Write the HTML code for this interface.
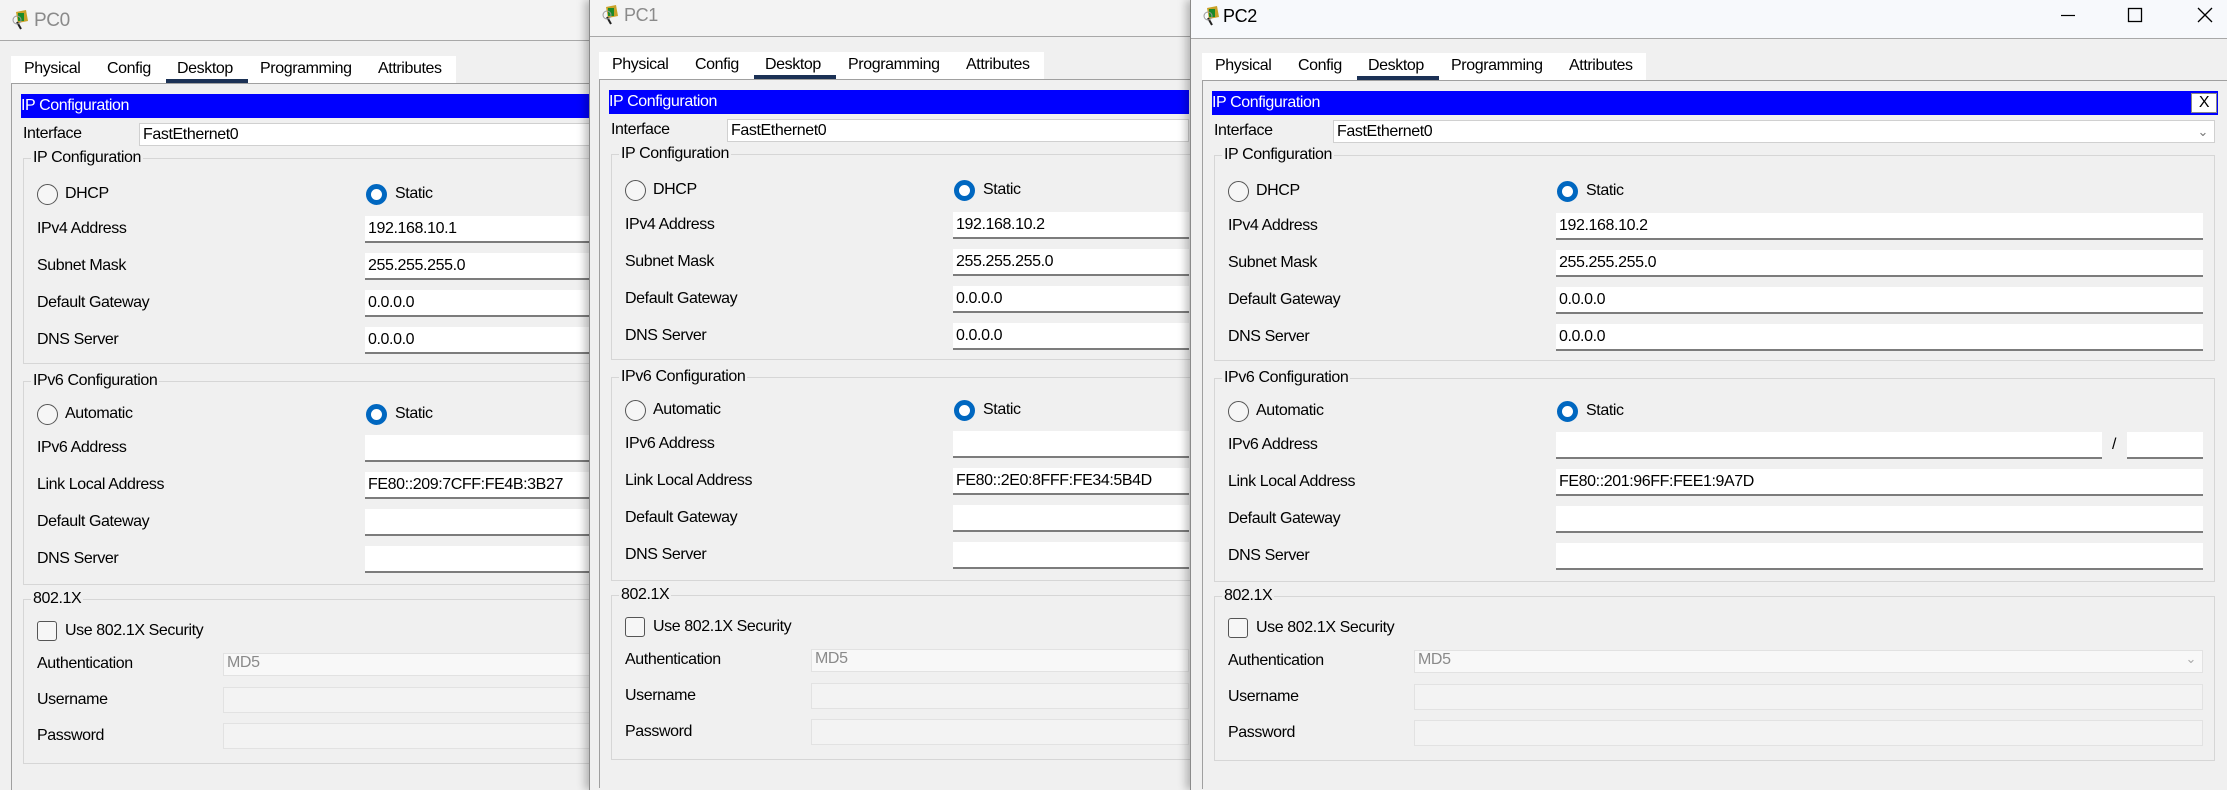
<!DOCTYPE html>
<html><head><meta charset="utf-8"><style>
*{box-sizing:border-box;margin:0;padding:0}
body{width:2227px;height:790px;overflow:hidden;background:#f0f0f0;font-family:"Liberation Sans",sans-serif;font-size:16px;letter-spacing:-0.4px;color:#000;position:relative}
.win{position:absolute;top:0;height:790px;background:#f0f0f0;overflow:hidden;border-left:1px solid #8a8a8a}
.tb{position:absolute;left:0;right:0;top:0;background:#f2f2f2;border-bottom:1px solid #a8a8a8}
.tb span{position:absolute;left:34px;font-size:17px}
.ico{position:absolute;left:12px;width:20px;height:22px}
.in{position:absolute;left:0;top:2px;right:0;bottom:0}
.a{position:absolute;white-space:nowrap}
.tabs{position:absolute;left:11px;top:54px;width:445px;height:28px;background:#fff}
.tabs span{position:absolute;top:4px}
.ul{position:absolute;left:155px;top:23px;width:82px;height:4px;background:#1b3155}
.panel{position:absolute;left:11px;top:81px;right:-2px;bottom:-2px;border-top:1px solid #a0a0a0;border-left:1px solid #a0a0a0}
.blue{position:absolute;left:21px;top:92px;height:24px;background:#0000ff;color:#fff;line-height:24px}
.lbl{position:absolute;left:37px;line-height:20px}
.inp{position:absolute;background:#fff;border-bottom:2px solid #7c7c7c;height:27px;line-height:25px;padding-left:3px}
.grp{position:absolute;left:23px;border:1px solid #d6d6d6}
.leg{position:absolute;left:31px;background:#f0f0f0;padding:0 2px;line-height:20px}
.rad{position:absolute;width:21px;height:21px;border-radius:50%;border:1px solid #555;background:#f6f6f6}
.rad.on{border:5.5px solid #0067c0;background:#fff}
.chk{position:absolute;left:37px;width:20px;height:20px;border:1px solid #555;border-radius:3px;background:#f6f6f6}
.fld{position:absolute;left:223px;border:1px solid #e2e2e2;background:#f3f3f3;color:#8a8a8a;padding-left:3px}
</style></head><body>

<!-- PC0 -->
<div class="win" style="left:0;width:600px;border-left:none">
 <div class="tb" style="height:41px;background:#f3f3f3"><svg class="ico" style="top:9px" viewBox="0 0 20 22"><path d="M4 3 L14 1 L16 12 L6 14Z" fill="#c9a227"/><rect x="6" y="4" width="6" height="8" fill="#1a8a2a"/><path d="M5 13 L9 20" stroke="#222" stroke-width="2"/><circle cx="5" cy="11" r="4" fill="none" stroke="#999"/></svg><span style="top:10px;color:#8a8a8a;font-size:19px">PC0</span></div>
 <div class="in">
  <div class="tabs"><span style="left:13px">Physical</span><span style="left:96px">Config</span><span style="left:166px">Desktop</span><span style="left:249px">Programming</span><span style="left:367px">Attributes</span><div class="ul"></div></div>
  <div class="panel"></div>
  <div class="blue" style="right:0">IP Configuration</div>
  <div class="lbl" style="left:23px;top:122px">Interface</div>
  <div class="inp" style="left:139px;top:121px;right:0;height:23px;line-height:21px;border:1px solid #d0d0d0">FastEthernet0</div>
  <div class="grp" style="top:156px;height:206px;right:-5px"></div><div class="leg" style="top:146px">IP Configuration</div>
  <div class="rad" style="left:37px;top:182px"></div><div class="lbl" style="left:65px;top:182px">DHCP</div>
  <div class="rad on" style="left:366px;top:182px"></div><div class="lbl" style="left:395px;top:182px">Static</div>
  <div class="lbl" style="top:217px">IPv4 Address</div><div class="inp" style="left:365px;right:0;top:214px">192.168.10.1</div>
  <div class="lbl" style="top:254px">Subnet Mask</div><div class="inp" style="left:365px;right:0;top:251px">255.255.255.0</div>
  <div class="lbl" style="top:291px">Default Gateway</div><div class="inp" style="left:365px;right:0;top:288px">0.0.0.0</div>
  <div class="lbl" style="top:328px">DNS Server</div><div class="inp" style="left:365px;right:0;top:325px">0.0.0.0</div>
  <div class="grp" style="top:379px;height:204px;right:-5px"></div><div class="leg" style="top:369px">IPv6 Configuration</div>
  <div class="rad" style="left:37px;top:402px"></div><div class="lbl" style="left:65px;top:402px">Automatic</div>
  <div class="rad on" style="left:366px;top:402px"></div><div class="lbl" style="left:395px;top:402px">Static</div>
  <div class="lbl" style="top:436px">IPv6 Address</div><div class="inp" style="left:365px;right:0;top:433px"></div>
  <div class="lbl" style="top:473px">Link Local Address</div><div class="inp" style="left:365px;right:0;top:470px">FE80::209:7CFF:FE4B:3B27</div>
  <div class="lbl" style="top:510px">Default Gateway</div><div class="inp" style="left:365px;right:0;top:507px"></div>
  <div class="lbl" style="top:547px">DNS Server</div><div class="inp" style="left:365px;right:0;top:544px"></div>
  <div class="grp" style="top:597px;height:165px;right:-5px"></div><div class="leg" style="top:587px">802.1X</div>
  <div class="chk" style="top:619px"></div><div class="lbl" style="left:65px;top:619px">Use 802.1X Security</div>
  <div class="lbl" style="top:652px">Authentication</div><div class="fld" style="top:651px;height:23px;right:0;background:#f8f8f8">MD5</div>
  <div class="lbl" style="top:688px">Username</div><div class="fld" style="top:685px;height:26px;right:0"></div>
  <div class="lbl" style="top:724px">Password</div><div class="fld" style="top:721px;height:26px;right:0"></div>
 </div>
</div>

<!-- PC1 -->
<div class="win" style="left:589px;width:602px;box-shadow:-4px 0 8px rgba(0,0,0,.25)">
 <div class="tb" style="height:37px;background:#f3f3f3"><svg class="ico" style="top:4px" viewBox="0 0 20 22"><path d="M4 3 L14 1 L16 12 L6 14Z" fill="#c9a227"/><rect x="6" y="4" width="6" height="8" fill="#1a8a2a"/><path d="M5 13 L9 20" stroke="#222" stroke-width="2"/><circle cx="5" cy="11" r="4" fill="none" stroke="#999"/></svg><span style="top:5px;color:#8a8a8a;font-size:18px">PC1</span></div>
 <div class="in" style="transform:translate(-2px,-4px)">
  <div class="tabs"><span style="left:13px">Physical</span><span style="left:96px">Config</span><span style="left:166px">Desktop</span><span style="left:249px">Programming</span><span style="left:367px">Attributes</span><div class="ul"></div></div>
  <div class="panel"></div>
  <div class="blue" style="right:0">IP Configuration</div>
  <div class="lbl" style="left:23px;top:122px">Interface</div>
  <div class="inp" style="left:139px;top:121px;right:0;height:23px;line-height:21px;border:1px solid #d0d0d0">FastEthernet0</div>
  <div class="grp" style="top:156px;height:206px;right:-5px"></div><div class="leg" style="top:146px">IP Configuration</div>
  <div class="rad" style="left:37px;top:182px"></div><div class="lbl" style="left:65px;top:182px">DHCP</div>
  <div class="rad on" style="left:366px;top:182px"></div><div class="lbl" style="left:395px;top:182px">Static</div>
  <div class="lbl" style="top:217px">IPv4 Address</div><div class="inp" style="left:365px;right:0;top:214px">192.168.10.2</div>
  <div class="lbl" style="top:254px">Subnet Mask</div><div class="inp" style="left:365px;right:0;top:251px">255.255.255.0</div>
  <div class="lbl" style="top:291px">Default Gateway</div><div class="inp" style="left:365px;right:0;top:288px">0.0.0.0</div>
  <div class="lbl" style="top:328px">DNS Server</div><div class="inp" style="left:365px;right:0;top:325px">0.0.0.0</div>
  <div class="grp" style="top:379px;height:204px;right:-5px"></div><div class="leg" style="top:369px">IPv6 Configuration</div>
  <div class="rad" style="left:37px;top:402px"></div><div class="lbl" style="left:65px;top:402px">Automatic</div>
  <div class="rad on" style="left:366px;top:402px"></div><div class="lbl" style="left:395px;top:402px">Static</div>
  <div class="lbl" style="top:436px">IPv6 Address</div><div class="inp" style="left:365px;right:0;top:433px"></div>
  <div class="lbl" style="top:473px">Link Local Address</div><div class="inp" style="left:365px;right:0;top:470px">FE80::2E0:8FFF:FE34:5B4D</div>
  <div class="lbl" style="top:510px">Default Gateway</div><div class="inp" style="left:365px;right:0;top:507px"></div>
  <div class="lbl" style="top:547px">DNS Server</div><div class="inp" style="left:365px;right:0;top:544px"></div>
  <div class="grp" style="top:597px;height:165px;right:-5px"></div><div class="leg" style="top:587px">802.1X</div>
  <div class="chk" style="top:619px"></div><div class="lbl" style="left:65px;top:619px">Use 802.1X Security</div>
  <div class="lbl" style="top:652px">Authentication</div><div class="fld" style="top:651px;height:23px;right:0;background:#f8f8f8">MD5</div>
  <div class="lbl" style="top:688px">Username</div><div class="fld" style="top:685px;height:26px;right:0"></div>
  <div class="lbl" style="top:724px">Password</div><div class="fld" style="top:721px;height:26px;right:0"></div>
 </div>
</div>

<!-- PC2 -->
<div class="win" style="left:1190px;width:1037px;box-shadow:-4px 0 8px rgba(0,0,0,.25)">
 <div class="tb" style="height:39px;background:#f7f9fc"><svg class="ico" style="top:5px" viewBox="0 0 20 22"><path d="M4 3 L14 1 L16 12 L6 14Z" fill="#c9a227"/><rect x="6" y="4" width="6" height="8" fill="#1a8a2a"/><path d="M5 13 L9 20" stroke="#222" stroke-width="2"/><circle cx="5" cy="11" r="4" fill="none" stroke="#999"/></svg><span style="top:6px;left:32px;font-size:18px">PC2</span>
  <svg style="position:absolute;left:0;top:0" width="1037" height="38"><path d="M870 15.5h14" stroke="#000" stroke-width="1.2"/><rect x="937.5" y="8.5" width="13" height="13" fill="none" stroke="#000" stroke-width="1.3"/><path d="M1007 8l14 14M1021 8l-14 14" stroke="#000" stroke-width="1.3"/></svg></div>
 <div class="in" style="transform:translate(0,-3px)">
  <div class="tabs" style="left:11px;width:444px"><span style="left:13px">Physical</span><span style="left:96px">Config</span><span style="left:166px">Desktop</span><span style="left:249px">Programming</span><span style="left:367px">Attributes</span><div class="ul"></div></div>
  <div class="panel"></div>
  <div class="blue" style="right:9px">IP Configuration<div style="position:absolute;right:1px;top:2px;width:26px;height:20px;background:#fff;color:#000;border:1px solid #888;text-align:center;line-height:18px">X</div></div>
  <div class="lbl" style="left:23px;top:122px">Interface</div>
  <div class="inp" style="left:142px;top:121px;right:12px;height:23px;line-height:21px;border:1px solid #d0d0d0">FastEthernet0<span style="position:absolute;right:6px;top:0;color:#777;font-size:13px">&#8964;</span></div>
  <div class="grp" style="top:156px;height:206px;right:12px"></div><div class="leg" style="top:146px">IP Configuration</div>
  <div class="rad" style="left:37px;top:182px"></div><div class="lbl" style="left:65px;top:182px">DHCP</div>
  <div class="rad on" style="left:366px;top:182px"></div><div class="lbl" style="left:395px;top:182px">Static</div>
  <div class="lbl" style="top:217px">IPv4 Address</div><div class="inp" style="left:365px;right:24px;top:214px">192.168.10.2</div>
  <div class="lbl" style="top:254px">Subnet Mask</div><div class="inp" style="left:365px;right:24px;top:251px">255.255.255.0</div>
  <div class="lbl" style="top:291px">Default Gateway</div><div class="inp" style="left:365px;right:24px;top:288px">0.0.0.0</div>
  <div class="lbl" style="top:328px">DNS Server</div><div class="inp" style="left:365px;right:24px;top:325px">0.0.0.0</div>
  <div class="grp" style="top:379px;height:204px;right:12px"></div><div class="leg" style="top:369px">IPv6 Configuration</div>
  <div class="rad" style="left:37px;top:402px"></div><div class="lbl" style="left:65px;top:402px">Automatic</div>
  <div class="rad on" style="left:366px;top:402px"></div><div class="lbl" style="left:395px;top:402px">Static</div>
  <div class="lbl" style="top:436px">IPv6 Address</div><div class="inp" style="left:365px;width:546px;top:433px"></div><div class="lbl" style="left:921px;top:436px">/</div><div class="inp" style="left:936px;right:24px;top:433px"></div>
  <div class="lbl" style="top:473px">Link Local Address</div><div class="inp" style="left:365px;right:24px;top:470px">FE80::201:96FF:FEE1:9A7D</div>
  <div class="lbl" style="top:510px">Default Gateway</div><div class="inp" style="left:365px;right:24px;top:507px"></div>
  <div class="lbl" style="top:547px">DNS Server</div><div class="inp" style="left:365px;right:24px;top:544px"></div>
  <div class="grp" style="top:597px;height:165px;right:12px"></div><div class="leg" style="top:587px">802.1X</div>
  <div class="chk" style="top:619px"></div><div class="lbl" style="left:65px;top:619px">Use 802.1X Security</div>
  <div class="lbl" style="top:652px">Authentication</div><div class="fld" style="top:651px;height:23px;right:24px;background:#f8f8f8">MD5<span style="position:absolute;right:6px;top:0;color:#aaa;font-size:13px">&#8964;</span></div>
  <div class="lbl" style="top:688px">Username</div><div class="fld" style="top:685px;height:26px;right:24px"></div>
  <div class="lbl" style="top:724px">Password</div><div class="fld" style="top:721px;height:26px;right:24px"></div>
 </div>
</div>
</body></html>
